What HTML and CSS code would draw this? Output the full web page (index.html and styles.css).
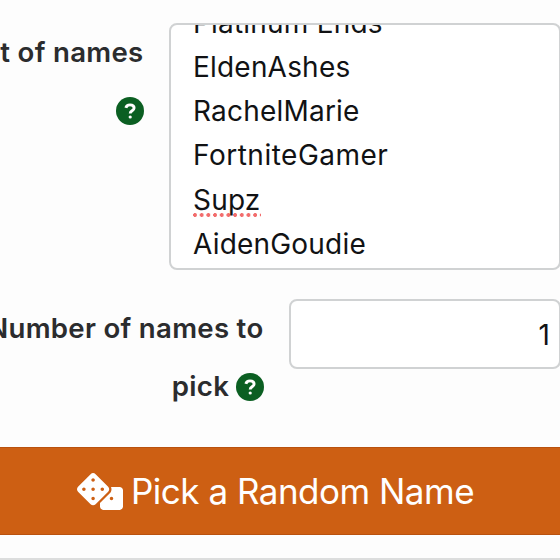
FILE: index.html
```html
<!DOCTYPE html>
<html lang="en">
<head>
	<meta charset="UTF-8">
	<title>Random Name Picker</title>
	<link rel="stylesheet" href="styles.css">
</head>
<body>

	<form class="picker">

		<div class="row row-names">
			<div class="label">
				<span class="label-line">List of names</span>
				<span class="label-line"><svg class="help" viewBox="0 0 28 28"><circle cx="14" cy="14" r="14"/><path d="M9.9 10.9C10.3 8.9 11.9 7.9 14 7.9c2.3 0 4.1 1.2 4.1 3.1 0 2.7-3.9 2.8-3.9 5.4"/><circle class="help-dot" cx="14.2" cy="20" r="1.6"/></svg></span>
			</div>
			<div class="field names">
				<div class="names-list">
					<div>Platinum Ends</div>
					<div>EldenAshes</div>
					<div>RachelMarie</div>
					<div class="wide">FortniteGamer</div>
					<div><span class="misspelled">Supz</span></div>
					<div>AidenGoudie</div>
				</div>
			</div>
		</div>

		<div class="row row-number">
			<div class="label">
				<span class="label-line">Number of names to</span>
				<span class="label-line">pick <svg class="help" viewBox="0 0 28 28"><circle cx="14" cy="14" r="14"/><path d="M9.9 10.9C10.3 8.9 11.9 7.9 14 7.9c2.3 0 4.1 1.2 4.1 3.1 0 2.7-3.9 2.8-3.9 5.4"/><circle class="help-dot" cx="14.2" cy="20" r="1.6"/></svg></span>
			</div>
			<div class="field number">1</div>
		</div>

		<button type="button" class="pick-btn">
			<svg class="dice" viewBox="0 0 640 512"><path d="M592 192H473.26c12.69 29.59 7.12 65.2-17 89.32L320 417.58V464c0 26.51 21.49 48 48 48h224c26.51 0 48-21.49 48-48V240c0-26.51-21.49-48-48-48zM480 376c-13.25 0-24-10.75-24-24s10.75-24 24-24 24 10.75 24 24-10.75 24-24 24zM433.63 189.3L258.7 14.37c-19.16-19.16-50.23-19.16-69.39 0L14.37 189.3c-19.16 19.16-19.16 50.23 0 69.39L189.3 433.63c19.16 19.16 50.23 19.16 69.39 0L433.63 258.7c19.16-19.17 19.16-50.24 0-69.4zM96 248c-13.25 0-24-10.75-24-24s10.75-24 24-24 24 10.75 24 24-10.75 24-24 24zm128 128c-13.25 0-24-10.75-24-24s10.75-24 24-24 24 10.75 24 24-10.75 24-24 24zm0-128c-13.25 0-24-10.75-24-24s10.75-24 24-24 24 10.75 24 24-10.75 24-24 24zm0-128c-13.25 0-24-10.75-24-24s10.75-24 24-24 24 10.75 24 24-10.75 24-24 24zm128 128c-13.25 0-24-10.75-24-24s10.75-24 24-24 24 10.75 24 24-10.75 24-24 24z"/></svg>
			<span>Pick a Random Name</span>
		</button>

	</form>

	<div class="divider"></div>

</body>
</html>
```

FILE: styles.css
```css
html {
	height: 100%;
	overflow: hidden;
}

body {
	margin: 0;
	height: 100%;
	overflow: hidden;
	background: #fdfdfd;
	color: #2b2c2e;
	font-family: Inter, "Liberation Sans", sans-serif;
	font-size: 28px;
}

.picker {
	padding-top: 23px;
}

.row {
	display: flex;
	justify-content: flex-end;
	width: 561px;
}

.row-names {
	height: 247px;
}

.row-number {
	height: 118px;
	margin-top: 29px;
}

.label {
	display: flex;
	flex-direction: column;
	align-items: flex-end;
	margin-right: 25.5px;
	font-size: 27.6px;
	font-weight: 600;
	letter-spacing: 0.3px;
	line-height: 58px;
	white-space: nowrap;
}

.label-line {
	height: 58px;
}

.help {
	width: 28px;
	height: 28px;
	margin-left: -1px;
	vertical-align: -5px;
	fill: #0b5f22;
}

.help path {
	fill: none;
	stroke: #fff;
	stroke-width: 2.9;
}

.help .help-dot {
	fill: #fff;
}

.field {
	box-sizing: border-box;
	flex: none;
	border: 2px solid #d0d2d3;
	border-radius: 8px;
	background: #fff;
	color: #111214;
	font-weight: 375;
	letter-spacing: 0.2px;
}

.names {
	display: flex;
	align-items: flex-end;
	width: 392px;
	height: 247px;
	padding: 0 22px 2px;
	overflow: hidden;
}

.names-list {
	line-height: 44.2px;
}

.names-list .wide {
	letter-spacing: 0.5px;
}

.misspelled {
	background: radial-gradient(circle at 2px 2px, #f26d6d 1.7px, transparent 2.2px) 0 100% / 6.7px 4px repeat-x;
}

.number {
	width: 272px;
	height: 70px;
	padding-right: 9px;
	line-height: 68px;
	text-align: right;
}

.pick-btn {
	display: flex;
	align-items: center;
	box-sizing: border-box;
	width: 100%;
	height: 88px;
	margin-top: 30px;
	padding: 0 0 0 77px;
	border: 0;
	border-top: 1px solid #b9520f;
	border-bottom: 1px solid #b9520f;
	background: #cd5f13;
	color: #fff;
	font-family: inherit;
	font-size: 35px;
	font-weight: 380;
	letter-spacing: -0.5px;
	white-space: nowrap;
}

.dice {
	width: 46px;
	height: 37px;
	margin-right: 8px;
	fill: #fff;
}

.divider {
	height: 2px;
	margin-top: 23px;
	background: #dcdddd;
}
```
